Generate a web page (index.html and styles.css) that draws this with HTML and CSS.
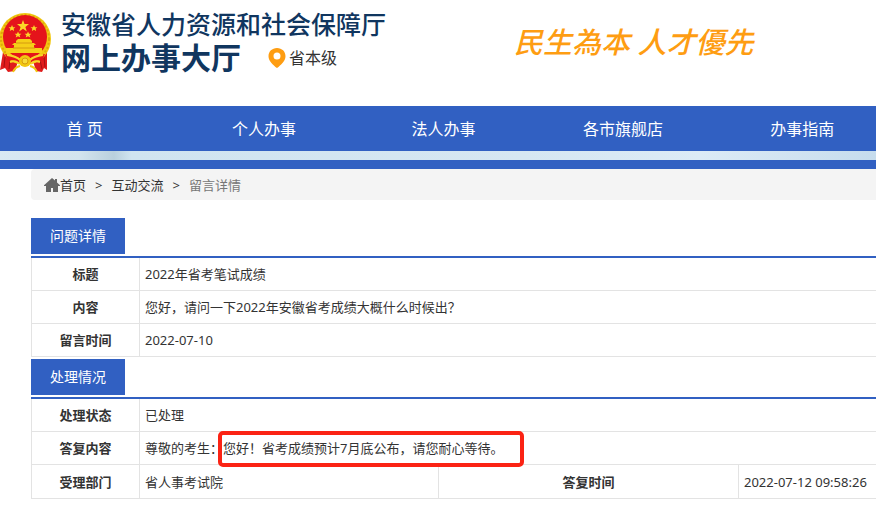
FILE: index.html
```html
<!DOCTYPE html>
<html lang="zh-CN">
<head>
    <meta charset="UTF-8">
    <meta name="viewport" content="width=device-width, initial-scale=1.0">
    <title>留言详情</title>
    <link rel="stylesheet" href="styles.css">
</head>
<body>
    <header class="header">
        <svg class="emblem" viewBox="0 0 52 60" aria-hidden="true">
            <path d="M3 39 L0 57 L5 55 L8 59 L15 58 L18 48 L33 48 L36 58 L42 59 L44 55 L47 57 L47 39 Z" fill="#e01c1c"/>
            <path d="M5 44 L4 54 M10 47 L9 56 M40 47 L42 56 M44 44 L45 54" stroke="#a80f12" stroke-width="1"/>
            <circle cx="25" cy="26" r="26" fill="#f2c811"/>
            <circle cx="25" cy="26" r="24" fill="none" stroke="#dca90a" stroke-width="2" stroke-dasharray="2 2"/>
            <circle cx="25" cy="24" r="22" fill="#e5141b"/>
            <path d="M23 7 L24.5 11 H29 L25.4 14 L26.8 18.5 L23 15.8 L19.2 18.5 L20.6 14 L17 11 H21.5 Z" fill="#fbd827"/>
            <path d="M12 12 l1 2.2 h2.4 l-1.8 1.5 .7 2.3 -2.3-1.3 -2.3 1.3 .7-2.3 -1.8-1.5 h2.4z M34 12 l1 2.2 h2.4 l-1.8 1.5 .7 2.3 -2.3-1.3 -2.3 1.3 .7-2.3 -1.8-1.5 h2.4z M18 18.500 l1 2.2 h2.4 l-1.8 1.500 .7 2.300 -2.300-1.300 -2.300 1.300 .7-2.300 -1.800-1.500 h2.400z M28 18.500 l1 2.200 h2.400 l-1.800 1.500 .7 2.300 -2.300-1.300 -2.300 1.300 .7-2.300 -1.800-1.500 h2.400z" fill="#fbd827"/>
            <path d="M16 28 L18 26 H30 L32 28 V30 H34 L36 32 H12 L14 30 H16 Z M14 32 H34 V35 H42 V40 H6 V35 H14 Z" fill="#f6cf18"/>
            <path d="M16 30 H32 M13 35 H35" stroke="#d69a10"/>
            <path d="M5 41 Q14 43 20 47 Q25 43 30 47 Q36 43 45 41 L42 48 Q35 46 30 50 Q25 54 20 50 Q14 46 8 48 Z" fill="#e5141b"/>
            <path d="M7 42 Q16 43 20 47 M43 42 Q34 43 30 47 M10 49 Q16 47 19 51 M40 49 Q34 47 31 51" fill="none" stroke="#f8d528" stroke-width="2"/>
            <circle cx="25" cy="48" r="6" fill="#f2c811"/>
            <circle cx="25" cy="48" r="3" fill="#f8dc3c" stroke="#d69a10"/>
            <path d="M20 53 Q15 54 13 59 M30 53 Q35 54 37 59" fill="none" stroke="#f2c811" stroke-width="2"/>
        </svg>
        <div class="brand">
            <h1 class="org">安徽省人力资源和社会保障厅</h1>
            <div class="site-row">
                <strong class="site">网上办事大厅</strong>
                <a class="region" href="#">
                    <svg class="pin" viewBox="0 0 18 20" aria-hidden="true">
                        <path d="M9 0 C4 0 0.5 3.6 0.5 8.2 C0.5 13 5 17 9 20 C13 17 17.5 13 17.5 8.2 C17.5 3.6 14 0 9 0 Z M9 4.5 A3.5 3.5 0 1 1 9 11.5 A3.5 3.5 0 1 1 9 4.5 Z" fill="#fe9d12" fill-rule="evenodd"/>
                    </svg>
                    省本级
                </a>
            </div>
        </div>
        <p class="slogan">民生為本 人才優先</p>
    </header>

    <nav class="nav">
        <a href="#">首 页</a>
        <a href="#">个人办事</a>
        <a href="#">法人办事</a>
        <a href="#">各市旗舰店</a>
        <a href="#">办事指南</a>
    </nav>
    <div class="banner"></div>

    <main class="main">
        <div class="crumbs">
            <svg class="home" viewBox="0 0 16 14" aria-hidden="true">
                <path d="M8 0 L11 2.6 V1 H13 V4.4 L16 7.2 V8 H14 V14 H9 V10 H7 V14 H2 V8 H0 V7.2 Z" fill="#666"/>
            </svg>
            <a href="#">首页</a>
            <span class="sep">&gt;</span>
            <a href="#">互动交流</a>
            <span class="sep">&gt;</span>
            <span class="current">留言详情</span>
        </div>

        <section class="block">
            <h2 class="tab">问题详情</h2>
            <table class="detail">
                <tr>
                    <th scope="row">标题</th>
                    <td>2022年省考笔试成绩</td>
                </tr>
                <tr>
                    <th scope="row">内容</th>
                    <td>您好，请问一下2022年安徽省考成绩大概什么时候出？</td>
                </tr>
                <tr>
                    <th scope="row">留言时间</th>
                    <td>2022-07-10</td>
                </tr>
            </table>
        </section>

        <section class="block">
            <h2 class="tab">处理情况</h2>
            <table class="detail">
                <tr>
                    <th scope="row">处理状态</th>
                    <td colspan="3">已处理</td>
                </tr>
                <tr>
                    <th scope="row">答复内容</th>
                    <td colspan="3" class="reply">尊敬的考生：您好！省考成绩预计7月底公布，请您耐心等待。<span class="mark"></span></td>
                </tr>
                <tr class="last">
                    <th scope="row">受理部门</th>
                    <td class="dept">省人事考试院</td>
                    <th scope="row" class="time-label">答复时间</th>
                    <td>2022-07-12 09:58:26</td>
                </tr>
            </table>
        </section>
    </main>
</body>
</html>
```
FILE: styles.css
```css
* {
    margin: 0;
    padding: 0;
    box-sizing: border-box;
}

body {
    font-family: "Noto Sans", "Noto Sans CJK SC", sans-serif;
    font-size: 13px;
    color: #333;
    background-color: #fff;
    overflow-x: hidden;
}

a {
    color: inherit;
    text-decoration: none;
}

.header {
    display: flex;
    align-items: flex-start;
    height: 106px;
    padding-top: 6px;
}

.emblem {
    width: 52px;
    height: 60px;
    margin-top: 7px;
    flex-shrink: 0;
}

.brand {
    margin-left: 9px;
    color: #10365f;
    white-space: nowrap;
}

.org {
    font-size: 25px;
    font-weight: 500;
    line-height: 36px;
}

.site-row {
    display: flex;
    align-items: center;
    gap: 22px;
}

.site {
    font-size: 30px;
    line-height: 32px;
}

.region {
    display: flex;
    align-items: center;
    gap: 3px;
    margin-left: 5px;
    font-size: 16px;
    line-height: 32px;
    color: #333;
}

.pin {
    width: 18px;
    height: 20px;
}

.slogan {
    margin-left: 128px;
    padding-top: 18px;
    font-size: 29px;
    font-style: italic;
    font-weight: 500;
    line-height: 36px;
    color: #fe9d12;
    white-space: nowrap;
}

.nav {
    display: grid;
    grid-template-columns: repeat(5, 1fr);
    margin: 0 -16px 0 -5px;
    background-color: #3160c2;
}

.nav a {
    padding-top: 1px;
    font-size: 16px;
    line-height: 44px;
    color: #fff;
    text-align: center;
}

.banner {
    height: 18px;
    border-bottom: 9px solid #3160c2;
    background: linear-gradient(90deg, #d9e9f3 0, #d3e4ee 9%, #b9d0dd 13%, #d0e4f0 15%, #d6e7f2 60%, #dcebf6 80%, #c6dced 100%);
}

.main {
    padding-left: 31px;
}

.crumbs {
    display: flex;
    align-items: center;
    height: 31px;
    margin-bottom: 18px;
    padding-left: 13px;
    border-radius: 4px 0 0 4px;
    background-color: #f4f4f4;
}

.home {
    width: 16px;
    height: 14px;
}

.sep {
    margin: 0 9px;
}

.current {
    color: #777;
}

.block {
    margin-bottom: 2px;
}

.tab {
    display: inline-block;
    width: 94px;
    margin-bottom: 2px;
    font-size: 14px;
    font-weight: normal;
    line-height: 36px;
    color: #fff;
    text-align: center;
    vertical-align: top;
    background-color: #3160c2;
}

.detail {
    width: 100%;
    border-collapse: collapse;
    border-top: 2px solid #3160c2;
}

.detail th,
.detail td {
    height: 33px;
    border: 1px solid #e3e3e3;
    line-height: 32px;
}

.detail tr:first-child th,
.detail tr:first-child td {
    border-top: 2px solid #3160c2;
}

.detail .last th,
.detail .last td {
    height: 34px;
}

.detail th {
    width: 108px;
    text-align: center;
}

.detail td {
    padding-left: 5px;
    border-right: none;
    text-align: left;
}

.detail .dept {
    width: 299px;
}

.detail .time-label {
    width: 300px;
}

.reply {
    position: relative;
}

/* red frame round the answer, lies over the row borders */
.mark {
    position: absolute;
    top: -1px;
    left: 78px;
    width: 306px;
    height: 36px;
    border: 4px solid #fb2314;
    border-radius: 5px;
}
```
